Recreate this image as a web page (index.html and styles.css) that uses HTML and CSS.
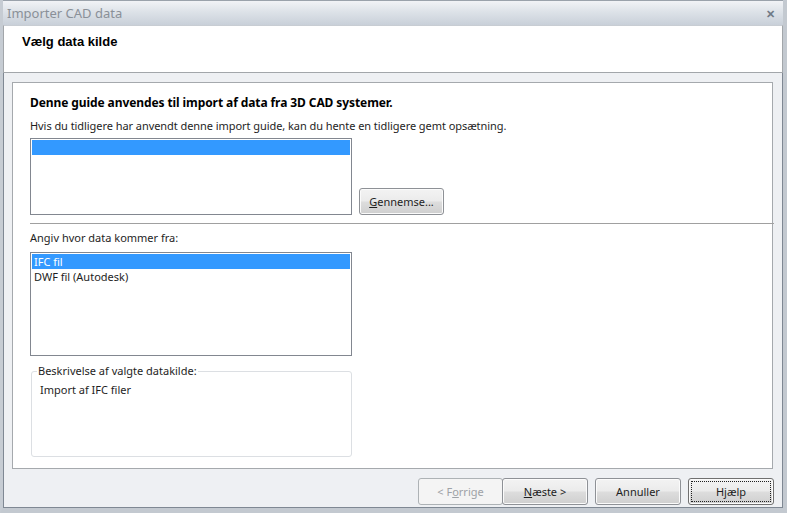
FILE: index.html
```html
<!DOCTYPE html>
<html lang="da">
<head>
  <meta charset="UTF-8">
  <title>Importer CAD data</title>
  <link rel="stylesheet" href="styles.css">
</head>
<body>
  <div class="window">
    <div class="titlebar">
      <span class="title">Importer CAD data</span>
      <span class="close">&#x2715;</span>
    </div>

    <div class="header">
      <div class="header-title">Vælg data kilde</div>
    </div>

    <div class="panel">
      <div class="intro-bold">Denne guide anvendes til import af data fra 3D CAD systemer.</div>
      <div class="intro">Hvis du tidligere har anvendt denne import guide, kan du hente en tidligere gemt opsætning.</div>

      <div class="saved-row">
        <div class="listbox saved">
          <div class="item selected">&nbsp;</div>
        </div>
        <button class="btn browse"><u>G</u>ennemse...</button>
      </div>

      <div class="separator"></div>

      <div class="label">Angiv hvor data kommer fra:</div>
      <div class="listbox sources">
        <div class="item selected">IFC fil</div>
        <div class="item">DWF fil (Autodesk)</div>
      </div>

      <fieldset class="group">
        <legend>Beskrivelse af valgte datakilde:</legend>
        <div class="desc">Import af IFC filer</div>
      </fieldset>
    </div>

    <div class="buttons">
      <div class="nav-pair">
        <button class="btn disabled">&lt; F<u>o</u>rrige</button>
        <button class="btn"><u>N</u>æste &gt;</button>
      </div>
      <button class="btn">Annuller</button>
      <button class="btn focused"><span class="focus-ring">Hjælp</span></button>
    </div>
  </div>
</body>
</html>
```

FILE: styles.css
```css
body {
  margin: 0;
  background: #eef0f3;
  font-family: "Noto Sans", "Open Sans", sans-serif;
  font-size: 11px;
  color: #1e1e1e;
}

.window {
  width: 787px;
  height: 513px;
  box-sizing: border-box;
  background: #eef0f3;
  border-left: 3px solid #c6ccd3;
  border-right: 4px solid #c3c9d0;
  border-bottom: 5px solid #c3c9d0;
  box-shadow: inset 1px 0 #7f8893, inset -1px 0 #7f8893, inset 0 -1px #7f8893;
  display: flex;
  flex-direction: column;
  overflow: hidden;
}

/* title bar */
.titlebar {
  height: 25px;
  margin-left: -3px;
  margin-right: -4px;
  padding: 0 12px 0 7px;
  display: flex;
  align-items: center;
  justify-content: space-between;
  background: linear-gradient(#f1f3f6, #dde2e8 45%, #c9d0d9);
  border-top: 1px solid #9aa2ab;
  box-sizing: border-box;
}

.title {
  font-size: 13px;
  color: #8a9098;
}

.close {
  font-size: 11px;
  font-weight: bold;
  color: #6f7a86;
}

/* header */
.header {
  height: 48px;
  background: #fff;
  border: 1px solid #a2a6aa;
  border-top-color: #c8cdd3;
  box-sizing: border-box;
  padding: 8px 0 0 18px;
}

.header-title {
  font-family: "Liberation Sans", Arial, sans-serif;
  font-weight: bold;
  font-size: 13px;
  color: #000;
}

/* content */
.panel {
  margin: 9px 10px 0 9px;
  height: 387px;
  box-sizing: border-box;
  background: #fff;
  border: 1px solid #a5a9ad;
  padding: 12px 0 0 17px;
}

.intro-bold {
  font-weight: bold;
  font-size: 12px;
  letter-spacing: -0.09px;
  color: #000;
  line-height: 16px;
}

.intro {
  margin-top: 7px;
  line-height: 16px;
  letter-spacing: -0.06px;
}

.saved-row {
  display: flex;
  align-items: flex-end;
  margin-top: 4px;
}

.listbox {
  width: 322px;
  box-sizing: border-box;
  border: 1px solid #828790;
  padding: 1px;
  background: #fff;
}

.listbox.saved {
  height: 77px;
}

.listbox.sources {
  height: 104px;
  margin-top: 6px;
}

.item {
  height: 15px;
  line-height: 15px;
  padding-left: 2px;
}

.item.selected {
  background: #3399ff;
  color: #fff;
}

.separator {
  height: 1px;
  background: #a0a0a0;
  margin: 8px -2px 0 0;
}

.label {
  margin-top: 6px;
  line-height: 16px;
}

.group {
  width: 321px;
  height: 93px;
  box-sizing: border-box;
  margin: 8px 0 0 1px;
  padding: 0 8px;
  border: 1px solid #dcdfe3;
  border-radius: 3px;
}

.group legend {
  padding: 0 1px;
  margin-left: -3px;
  line-height: 14px;
}

.desc {
  margin-top: 4px;
}

/* buttons */
.btn {
  font-family: inherit;
  font-size: 11px;
  color: #1e1e1e;
  width: 86px;
  height: 27px;
  padding: 0;
  border: 1px solid #8e9196;
  border-radius: 3px;
  background: linear-gradient(#f3f3f3, #ebebeb 48%, #dddddd 52%, #cfcfcf);
  box-shadow: inset 0 0 0 1px #fbfbfb;
}

.btn.browse {
  margin-left: 7px;
  width: 85px;
}

.btn.disabled {
  color: #9ea2a6;
  border-color: #adb2b5;
  background: #f4f4f4;
  box-shadow: none;
}

.btn.focused {
  border-color: #707070;
}

.focus-ring {
  display: block;
  margin: 2px;
  height: 19px;
  line-height: 19px;
  border: 1px dotted #202020;
}

.buttons {
  display: flex;
  justify-content: flex-end;
  gap: 7px;
  margin: 9px 9px 0 0;
}

.nav-pair {
  display: flex;
}

.nav-pair .btn.disabled {
  width: 85px;
}

.nav-pair .btn + .btn {
  margin-left: -1px;
}
```
